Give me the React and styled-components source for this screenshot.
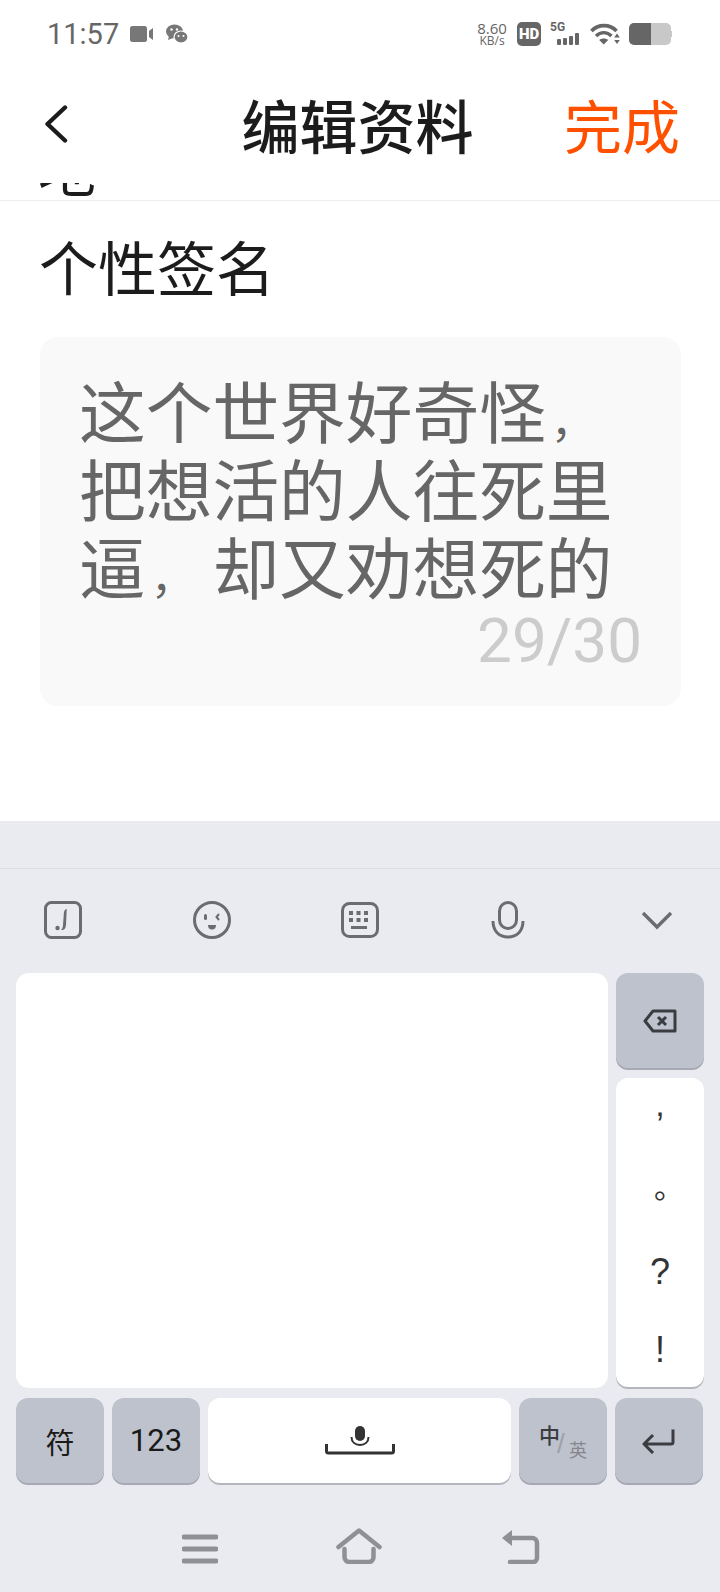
import React from 'react';
import styled, { createGlobalStyle } from 'styled-components';

const CJK = '"Noto Sans CJK SC", "Noto Sans", sans-serif';

const GlobalStyle = createGlobalStyle`
  html, body {
    margin: 0;
    padding: 0;
    background: #fff;
  }
  * {
    box-sizing: border-box;
  }
`;

const Page = styled.div`
  width: 720px;
  height: 1592px;
  overflow: hidden;
  display: flex;
  flex-direction: column;
  background: #fff;
  font-family: ${CJK};
`;

const StatusBar = styled.div`
  height: 68px;
  flex: none;
  padding: 0 48px 0 47px;
  display: flex;
  align-items: center;
  justify-content: space-between;
  color: #666;
`;

const StatusGroup = styled.div`
  display: flex;
  align-items: center;
`;

const Time = styled.span`
  font-family: Roboto, sans-serif;
  font-size: 29px;
  line-height: 34px;
  margin-right: 11px;
`;

const Speed = styled.div`
  font-family: "Open Sans", sans-serif;
  text-align: center;
  width: 30px;
  margin-right: 10px;
`;

const SpeedValue = styled.div`
  font-size: 15px;
  line-height: 12px;
`;

const SpeedUnit = styled.div`
  font-size: 12px;
  line-height: 12px;
  margin-top: 1px;
`;

const HdBadge = styled.span`
  width: 24px;
  height: 24px;
  border-radius: 5px;
  background: #666;
  color: #fff;
  font: 900 15px/24px Roboto, sans-serif;
  text-align: center;
  margin-right: 9px;
`;

const SignalWrap = styled.div`
  position: relative;
  width: 30px;
  height: 24px;
  margin-right: 10px;
`;

const FiveG = styled.span`
  position: absolute;
  left: 0;
  top: -1px;
  font: 700 12px/13px Roboto, sans-serif;
`;

const NavBar = styled.div`
  height: 115px;
  flex: none;
  padding: 0 40px 3px 35px;
  display: grid;
  grid-template-columns: 1fr auto 1fr;
  align-items: center;
`;

const BackButton = styled.div`
  margin-left: 9px;
  display: flex;
`;

const Title = styled.div`
  font-size: 58px;
  line-height: 70px;
  font-weight: 500;
  color: #1c1c1c;
`;

const DoneButton = styled.div`
  justify-self: end;
  font-size: 58px;
  line-height: 70px;
  color: #ff5000;
`;

const ClippedRow = styled.div`
  height: 18px;
  flex: none;
  overflow: hidden;
  border-bottom: 1px solid #eeeeee;
  padding-left: 38px;
  display: flex;
  align-items: flex-end;
`;

const ClippedText = styled.div`
  font-size: 58px;
  line-height: 70px;
  color: #1c1c1c;
  margin-bottom: -2px;
`;

const Section = styled.div`
  flex: 1;
  padding: 30px 39px 0 39px;
`;

const FieldLabel = styled.div`
  font-size: 59px;
  line-height: 70px;
  color: #1c1c1c;
`;

const Card = styled.div`
  height: 369px;
  margin: 36px 0 0 1px;
  border-radius: 18px;
  background: #f9f9f9;
  padding: 33px 39px 0 39px;
  display: flex;
  flex-direction: column;
`;

const BioText = styled.div`
  font-size: 66.7px;
  line-height: 78px;
  color: #666;
`;

const BioComma = styled.span`
  display: inline-block;
  width: 66.7px;
  padding-left: 5px;
  font-size: 44px;
  line-height: 44px;
`;

const Counter = styled.div`
  align-self: flex-end;
  margin-top: 7px;
  font-family: Roboto, sans-serif;
  font-size: 62px;
  line-height: 60px;
  color: #cccccc;
`;

const Keyboard = styled.div`
  height: 771px;
  flex: none;
  background: #e9ebf0;
  padding: 47px 16px 0;
  display: flex;
  flex-direction: column;
`;

const ToolBar = styled.div`
  height: 105px;
  margin: 0 -16px;
  border-top: 1px solid #dcdee3;
  padding: 0 0 2px 43px;
  display: flex;
  align-items: center;
  gap: 108.500px;
`;

const ToolSlot = styled.div`
  width: 40px;
  display: flex;
  justify-content: center;
`;

const KeyGrid = styled.div`
  display: grid;
  grid-template-columns: 592px 88px;
  grid-template-rows: 95px 309px;
  gap: 10px 8px;
`;

const HandwritePad = styled.div`
  grid-row: 1 / 3;
  height: 415px;
  background: #fff;
  border-radius: 13px;
`;

const Key = styled.div`
  display: flex;
  align-items: center;
  justify-content: center;
  border-radius: 12px;
  background: ${(p) => (p.$light ? '#fff' : '#bec2cc')};
  box-shadow: 0 2px 0 ${(p) => (p.$light ? '#b4b6bd' : '#a6a9b3')};
  color: #1a1a1a;
`;

const PunctuationKey = styled(Key)`
  flex-direction: column;
  justify-content: flex-start;
  color: #333;
`;

const Punct = styled.span`
  display: block;
  height: 40px;
  line-height: 40px;
  margin-top: ${(p) => p.$top}px;
  padding-left: ${(p) => p.$shift || 0}px;
  font-size: ${(p) => p.$size}px;
  font-family: ${(p) => (p.$cjk ? CJK : '"Liberation Sans", sans-serif')};
`;

const BottomRow = styled.div`
  margin-top: 11px;
  display: grid;
  grid-template-columns: 88px 88px 303px 88px 88px;
  gap: 8px;
  height: 85px;
`;

const KeyLabel = styled.span`
  font-size: ${(p) => p.$size}px;
  font-family: ${(p) => (p.$latin ? 'Roboto, sans-serif' : CJK)};
`;

const LangLabel = styled.div`
  width: 50px;
  height: 36px;
  position: relative;
  color: #3a3c42;
`;

const LangMain = styled.span`
  position: absolute;
  left: 1px;
  top: -4px;
  font-size: 21px;
  line-height: 30px;
  font-weight: 500;
`;

const LangSlash = styled.span`
  position: absolute;
  left: 19px;
  top: 6px;
  font: 28px/30px "Liberation Sans", sans-serif;
  color: #a0a2aa;
`;

const LangAlt = styled.span`
  position: absolute;
  left: 31px;
  top: 13px;
  font-size: 18px;
  line-height: 26px;
  color: #85878f;
`;

const SystemBar = styled.div`
  flex: 1;
  display: flex;
  align-items: center;
  justify-content: center;
  gap: 118px;
  padding: 16px 0 0 2px;
`;

const MenuSlot = styled.div`
  display: flex;
  margin-top: 6px;
`;

const CameraIcon = () => (
  <svg width="24" height="18" viewBox="0 0 24 18" style={{ marginRight: 12 }}>
    <rect x="0" y="1" width="17" height="16" rx="2.5" fill="#777" />
    <path d="M19 6l4-3v12l-4-3z" fill="#777" />
  </svg>
);

const WeChatIcon = () => (
  <svg width="22" height="20" viewBox="0 0 22 20">
    <ellipse cx="8.5" cy="7.5" rx="8.5" ry="7" fill="#777" />
    <path d="M3 12l-1 4 5-2z" fill="#777" />
    <ellipse cx="15" cy="13" rx="7" ry="6" fill="#777" stroke="#fff" strokeWidth="1.2" />
    <circle cx="5.5" cy="5.5" r="1.2" fill="#fff" />
    <circle cx="11" cy="5.5" r="1.2" fill="#fff" />
    <circle cx="12.5" cy="12" r="1" fill="#fff" />
    <circle cx="17.5" cy="12" r="1" fill="#fff" />
  </svg>
);

const SignalBars = () => (
  <svg width="23" height="12" viewBox="0 0 23 12" style={{ position: 'absolute', left: 7, bottom: 1 }}>
    <rect x="0" y="6" width="4" height="6" rx="1" fill="#666" />
    <rect x="6" y="5" width="4" height="7" rx="1" fill="#666" />
    <rect x="12" y="3" width="4" height="9" rx="1" fill="#666" />
    <rect x="18" y="0" width="4" height="12" rx="1" fill="#666" />
  </svg>
);

const WifiIcon = () => (
  <svg width="30" height="22" viewBox="0 0 30 22" style={{ marginRight: 9 }}>
    <path d="M1.500 8C8 .8 20 .8 26.500 8" fill="none" stroke="#666" strokeWidth="3.600" />
    <path d="M6 13C10.500 8.500 17 8.500 21.500 13" fill="none" stroke="#666" strokeWidth="3.400" />
    <path d="M13.700 21.500l-4.500-4.500c2.500-2 6.500-2 9 0z" fill="#666" />
    <path d="M27 10.500l2.800 4h-5.600zM27 21l-2.800-4h5.600z" fill="#666" />
  </svg>
);

const BatteryIcon = () => (
  <svg width="43" height="22" viewBox="0 0 43 22">
    <path d="M22 0h15a5 5 0 0 1 5 5v12a5 5 0 0 1-5 5H22z" fill="#c8c8c8" />
    <path d="M5 0h17v22H5a5 5 0 0 1-5-5V5a5 5 0 0 1 5-5z" fill="#666" />
    <rect x="41" y="8" width="2" height="6" fill="#c8c8c8" />
  </svg>
);

const BackIcon = () => (
  <svg width="24" height="38" viewBox="0 0 24 38">
    <path d="M21 2.500L3.500 19L21 35.500" fill="none" stroke="#1c1c1c" strokeWidth="4.400" strokeLinecap="round" strokeLinejoin="round" />
  </svg>
);

const ScriptIcon = () => (
  <svg width="38" height="38" viewBox="0 0 38 38">
    <rect x="1.500" y="1.500" width="35" height="35" rx="6" fill="none" stroke="#6b6c71" strokeWidth="3" />
    <path d="M23 8c-2.500.5-3 2-3.200 5l-.8 11c-.2 3-1 4.500-2.500 5c3.500.3 5-1 5.500-5l.5-11c.1-3 .2-4 .5-5z" fill="#6b6c71" />
    <circle cx="13.500" cy="27" r="2.200" fill="#6b6c71" />
  </svg>
);

const SmileIcon = () => (
  <svg width="38" height="38" viewBox="0 0 38 38">
    <circle cx="19" cy="19" r="17.500" fill="none" stroke="#6b6c71" strokeWidth="3" />
    <rect x="11" y="13" width="3" height="6" rx="1.500" fill="#6b6c71" />
    <path d="M26 13l-2.500 3l2.500 3" fill="none" stroke="#6b6c71" strokeWidth="2" />
    <path d="M15 24h8c0 3-1.500 4.500-4 4.500s-4-1.500-4-4.500z" fill="#6b6c71" />
  </svg>
);

const KeyboardIcon = () => (
  <svg width="38" height="36" viewBox="0 0 38 36">
    <rect x="1.500" y="1.500" width="35" height="33" rx="7" fill="none" stroke="#6b6c71" strokeWidth="3" />
    {[8, 15.500, 23].map((x) => (
      <g key={x} fill="#6b6c71">
        <rect x={x} y="9" width="4" height="4" />
        <rect x={x} y="16" width="4" height="4" />
      </g>
    ))}
    <rect x="10" y="24" width="16" height="3" fill="#6b6c71" />
  </svg>
);

const MicIcon = () => (
  <svg width="34" height="38" viewBox="0 0 34 38" style={{ marginLeft: -2 }}>
    <rect x="8.500" y="1.500" width="17" height="26" rx="8.500" fill="none" stroke="#6b6c71" strokeWidth="3" />
    <path d="M2 20c0 10 6 16 15 16s15-6 15-16" fill="none" stroke="#6b6c71" strokeWidth="3" />
  </svg>
);

const ChevronIcon = () => (
  <svg width="32" height="20" viewBox="0 0 32 20">
    <path d="M2 3l14 14L30 3" fill="none" stroke="#6b6c71" strokeWidth="3.400" />
  </svg>
);

const BackspaceIcon = () => (
  <svg width="34" height="24" viewBox="0 0 34 24">
    <path d="M32 2H10L2 12l8 10h22z" fill="none" stroke="#3a3c42" strokeWidth="3" strokeLinejoin="round" />
    <path d="M15 8l8 8M23 8l-8 8" stroke="#3a3c42" strokeWidth="3" />
  </svg>
);

const SpaceMicIcon = () => (
  <svg width="70" height="30" viewBox="0 0 70 30">
    <rect x="30" y="0" width="10" height="15" rx="5" fill="#333" />
    <path d="M26.500 11c0 5 3.500 8 8.500 8s8.500-3 8.500-8" fill="none" stroke="#333" strokeWidth="2" />
    <path d="M1.500 18v7a2 2 0 0 0 2 2h63a2 2 0 0 0 2-2v-7" fill="none" stroke="#333" strokeWidth="3" />
  </svg>
);

const EnterIcon = () => (
  <svg width="34" height="26" viewBox="0 0 34 26">
    <path d="M31 1.500V14a2 2 0 0 1-2 2H3M11 7l-9 9l9 9" fill="none" stroke="#3a3c42" strokeWidth="3" strokeLinejoin="round" />
  </svg>
);

const MenuIcon = () => (
  <svg width="36" height="30" viewBox="0 0 36 30">
    <path d="M2 3h32M2 15h32M2 27h32" stroke="#8e9095" strokeWidth="5" strokeLinecap="round" />
  </svg>
);

const HomeIcon = () => (
  <svg width="46" height="36" viewBox="0 0 46 36">
    <path d="M2.500 19L23 2.500L43.500 19" fill="none" stroke="#8e9095" strokeWidth="4.500" strokeLinecap="round" strokeLinejoin="round" />
    <path d="M8.500 21v8a5 5 0 0 0 5 5h19a5 5 0 0 0 5-5v-8" fill="none" stroke="#8e9095" strokeWidth="4.500" strokeLinecap="round" />
  </svg>
);

const ReturnIcon = () => (
  <svg width="40" height="36" viewBox="0 0 40 36">
    <path d="M2 10L12 2v16z" fill="#8e9095" />
    <path d="M8 10h24a5 5 0 0 1 5 5v15a4 4 0 0 1-4 4H10" fill="none" stroke="#8e9095" strokeWidth="4.500" strokeLinecap="round" />
  </svg>
);

const App = () => (
  <Page>
    <GlobalStyle />
    <StatusBar>
      <StatusGroup>
        <Time>11:57</Time>
        <CameraIcon />
        <WeChatIcon />
      </StatusGroup>
      <StatusGroup>
        <Speed>
          <SpeedValue>8.60</SpeedValue>
          <SpeedUnit>KB/s</SpeedUnit>
        </Speed>
        <HdBadge>HD</HdBadge>
        <SignalWrap>
          <FiveG>5G</FiveG>
          <SignalBars />
        </SignalWrap>
        <WifiIcon />
        <BatteryIcon />
      </StatusGroup>
    </StatusBar>
    <NavBar>
      <BackButton>
        <BackIcon />
      </BackButton>
      <Title>编辑资料</Title>
      <DoneButton>完成</DoneButton>
    </NavBar>
    <ClippedRow>
      <ClippedText>地</ClippedText>
    </ClippedRow>
    <Section>
      <FieldLabel>个性签名</FieldLabel>
      <Card>
        <BioText>
          这个世界好奇怪<BioComma>，</BioComma>把想活的人往死里逼<BioComma>，</BioComma>却又劝想死的
        </BioText>
        <Counter>29/30</Counter>
      </Card>
    </Section>
    <Keyboard>
      <ToolBar>
        <ToolSlot><ScriptIcon /></ToolSlot>
        <ToolSlot><SmileIcon /></ToolSlot>
        <ToolSlot><KeyboardIcon /></ToolSlot>
        <ToolSlot><MicIcon /></ToolSlot>
        <ToolSlot><ChevronIcon /></ToolSlot>
      </ToolBar>
      <KeyGrid>
        <HandwritePad />
        <Key>
          <BackspaceIcon />
        </Key>
        <PunctuationKey $light>
          <Punct $top={6} $size={34}>,</Punct>
          <Punct $top={41} $size={30} $shift={18} $cjk>。</Punct>
          <Punct $top={47} $size={36}>?</Punct>
          <Punct $top={38} $size={36}>!</Punct>
        </PunctuationKey>
      </KeyGrid>
      <BottomRow>
        <Key>
          <KeyLabel $size={29}>符</KeyLabel>
        </Key>
        <Key>
          <KeyLabel $size={31} $latin>123</KeyLabel>
        </Key>
        <Key $light>
          <SpaceMicIcon />
        </Key>
        <Key>
          <LangLabel>
            <LangMain>中</LangMain>
            <LangSlash>/</LangSlash>
            <LangAlt>英</LangAlt>
          </LangLabel>
        </Key>
        <Key>
          <EnterIcon />
        </Key>
      </BottomRow>
      <SystemBar>
        <MenuSlot><MenuIcon /></MenuSlot>
        <HomeIcon />
        <ReturnIcon />
      </SystemBar>
    </Keyboard>
  </Page>
);

export default App;
